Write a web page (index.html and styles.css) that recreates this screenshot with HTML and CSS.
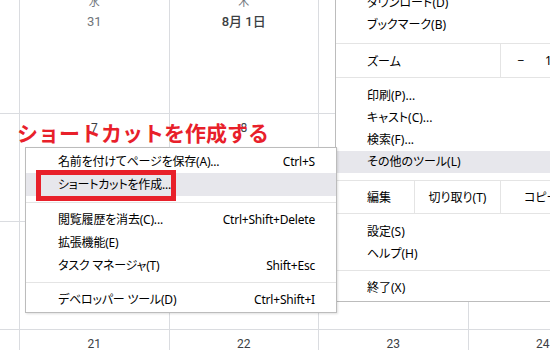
FILE: index.html
```html
<!DOCTYPE html>
<html lang="ja">
<head>
    <meta charset="UTF-8">
    <meta name="viewport" content="width=device-width, initial-scale=1.0">
    <title>ショートカットを作成する</title>
    <link rel="stylesheet" href="styles.css">
</head>
<body>

<div class="calendar">
    <div class="cell gutter"></div>
    <div class="cell head"><span class="dow">水</span><span class="date">31</span></div>
    <div class="cell head"><span class="dow">木</span><span class="date month">8月 1日</span></div>
    <div class="cell head"><span class="dow">金</span><span class="date">2</span></div>
    <div class="cell head"><span class="dow">土</span><span class="date">3</span></div>

    <div class="cell gutter"></div>
    <div class="cell"><span class="date">7</span></div>
    <div class="cell"><span class="date">8</span></div>
    <div class="cell"><span class="date">9</span></div>
    <div class="cell"><span class="date">10</span></div>

    <div class="cell gutter"></div>
    <div class="cell"><span class="date">14</span></div>
    <div class="cell"><span class="date">15</span></div>
    <div class="cell"><span class="date">16</span></div>
    <div class="cell"><span class="date">17</span></div>

    <div class="cell gutter"></div>
    <div class="cell"><span class="date">21</span></div>
    <div class="cell"><span class="date">22</span></div>
    <div class="cell"><span class="date">23</span></div>
    <div class="cell"><span class="date">24</span></div>
</div>

<h1 class="note">ショートカットを作成する</h1>

<!-- browser main menu -->
<div class="menu main-menu">
    <div class="group">
        <div class="item">ダウンロード(D)</div>
        <div class="item">ブックマーク(B)</div>
    </div>
    <div class="row zoom-row">
        <div class="cell-label zoom-label">ズーム</div>
        <div class="cell-btn minus">−</div>
        <div class="cell-text">100%</div>
    </div>
    <div class="group">
        <div class="item">印刷(P)...</div>
        <div class="item">キャスト(C)...</div>
        <div class="item">検索(F)...</div>
        <div class="item active">その他のツール(L)</div>
    </div>
    <div class="row edit-row">
        <div class="cell-label edit-label">編集</div>
        <div class="cell-btn cut">切り取り(T)</div>
        <div class="cell-btn copy">コピー(C)</div>
    </div>
    <div class="group short">
        <div class="item">設定(S)</div>
        <div class="item">ヘルプ(H)</div>
    </div>
    <div class="group last">
        <div class="item">終了(X)</div>
    </div>
</div>

<!-- その他のツール submenu -->
<div class="menu sub-menu">
    <div class="group first">
        <div class="item"><span>名前を付けてページを保存(A)...</span><span>Ctrl+S</span></div>
        <div class="item active"><span>ショートカットを作成...</span></div>
    </div>
    <div class="group">
        <div class="item"><span>閲覧履歴を消去(C)...</span><span>Ctrl+Shift+Delete</span></div>
        <div class="item"><span>拡張機能(E)</span></div>
        <div class="item"><span>タスク マネージャ(T)</span><span>Shift+Esc</span></div>
    </div>
    <div class="group last">
        <div class="item"><span>デベロッパー ツール(D)</span><span>Ctrl+Shift+I</span></div>
    </div>
</div>

<div class="mark"></div>

</body>
</html>
```

FILE: styles.css
```css
body {
    margin: 0;
    width: 550px;
    height: 350px;
    overflow: hidden;
    position: relative;
    background-color: #fff;
    font-family: Roboto, "Noto Sans CJK JP", sans-serif;
}

/* calendar in the background */
.calendar {
    display: grid;
    grid-template-columns: 20px repeat(4, 149.5px);
    grid-template-rows: 122px 108px 108px 60px;
    margin-top: -8px;
}

.cell {
    box-sizing: border-box;
    border-right: 1px solid #dadce0;
    border-bottom: 1px solid #dadce0;
    display: flex;
    flex-direction: column;
    align-items: center;
    padding-top: 6px;
}

.cell.head {
    padding-top: 3px;
}

.dow {
    font-size: 11px;
    line-height: 15px;
    color: #70757a;
}

.date {
    font-size: 12px;
    line-height: 16px;
    color: #3c4043;
}

.head .date {
    font-size: 13px;
    line-height: 24px;
    color: #70757a;
}

.head .date.month {
    color: #3c4043;
    font-weight: 500;
}

/* red annotation */
.note {
    position: absolute;
    left: 17px;
    top: 119px;
    margin: 0;
    font-family: "Noto Sans CJK JP", sans-serif;
    font-size: 21px;
    line-height: 26px;
    font-weight: 700;
    color: #e8202a;
}

.mark {
    position: absolute;
    left: 36px;
    top: 170px;
    width: 140px;
    height: 31px;
    box-sizing: border-box;
    border: 5px solid #e8202a;
}

/* menus */
.menu {
    position: absolute;
    box-sizing: border-box;
    background-color: #fff;
    border: 1px solid #bcbcbc;
    font-family: "Noto Sans", "Noto Sans CJK JP", sans-serif;
    font-feature-settings: "palt";
    font-size: 12px;
    color: #000;
}

.group {
    padding: 7px 0;
    border-bottom: 1px solid #e4e4e4;
}

.group.last {
    border-bottom: none;
}

.item {
    height: 22px;
    line-height: 22px;
    white-space: nowrap;
}

.item.active {
    background-color: #e7e7ec;
}

.main-menu {
    left: 335px;
    top: -16px;
    width: 260px;
}

.main-menu .item {
    padding-left: 31px;
}

.main-menu .group.short {
    padding-bottom: 5px;
}

.main-menu .group.last {
    padding: 6px 0 2px;
}

.row {
    display: flex;
    box-sizing: border-box;
    border-bottom: 1px solid #e4e4e4;
    align-items: center;
}

.zoom-row {
    height: 34px;
}

.edit-row {
    height: 33px;
}

.cell-label {
    padding-left: 31px;
    box-sizing: border-box;
    height: 100%;
    display: flex;
    align-items: center;
}

.zoom-label {
    width: 164px;
}

.edit-label {
    width: 78px;
}

.cell-btn {
    box-sizing: border-box;
    height: 100%;
    border-left: 1px solid #e4e4e4;
    display: flex;
    align-items: center;
    justify-content: center;
}

.minus {
    width: 41px;
}

.cut {
    width: 86px;
}

.copy {
    justify-content: flex-start;
    padding-left: 23px;
    flex: 1;
}

.cell-text {
    padding-left: 4px;
}

.sub-menu {
    left: 25px;
    top: 147px;
    width: 312px;
    height: 166px;
    box-shadow: 1px 1px 2px rgba(0, 0, 0, 0.12);
}

.sub-menu .group {
    padding: 5px 0;
}

.sub-menu .group.first {
    padding: 2px 0 6px;
}

.sub-menu .group.last {
    padding: 5px 0 1px;
}

.sub-menu .item {
    height: 23px;
    box-sizing: border-box;
    padding: 1px 21px 0 32px;
    display: flex;
    justify-content: space-between;
    letter-spacing: -0.2px;
}
```
